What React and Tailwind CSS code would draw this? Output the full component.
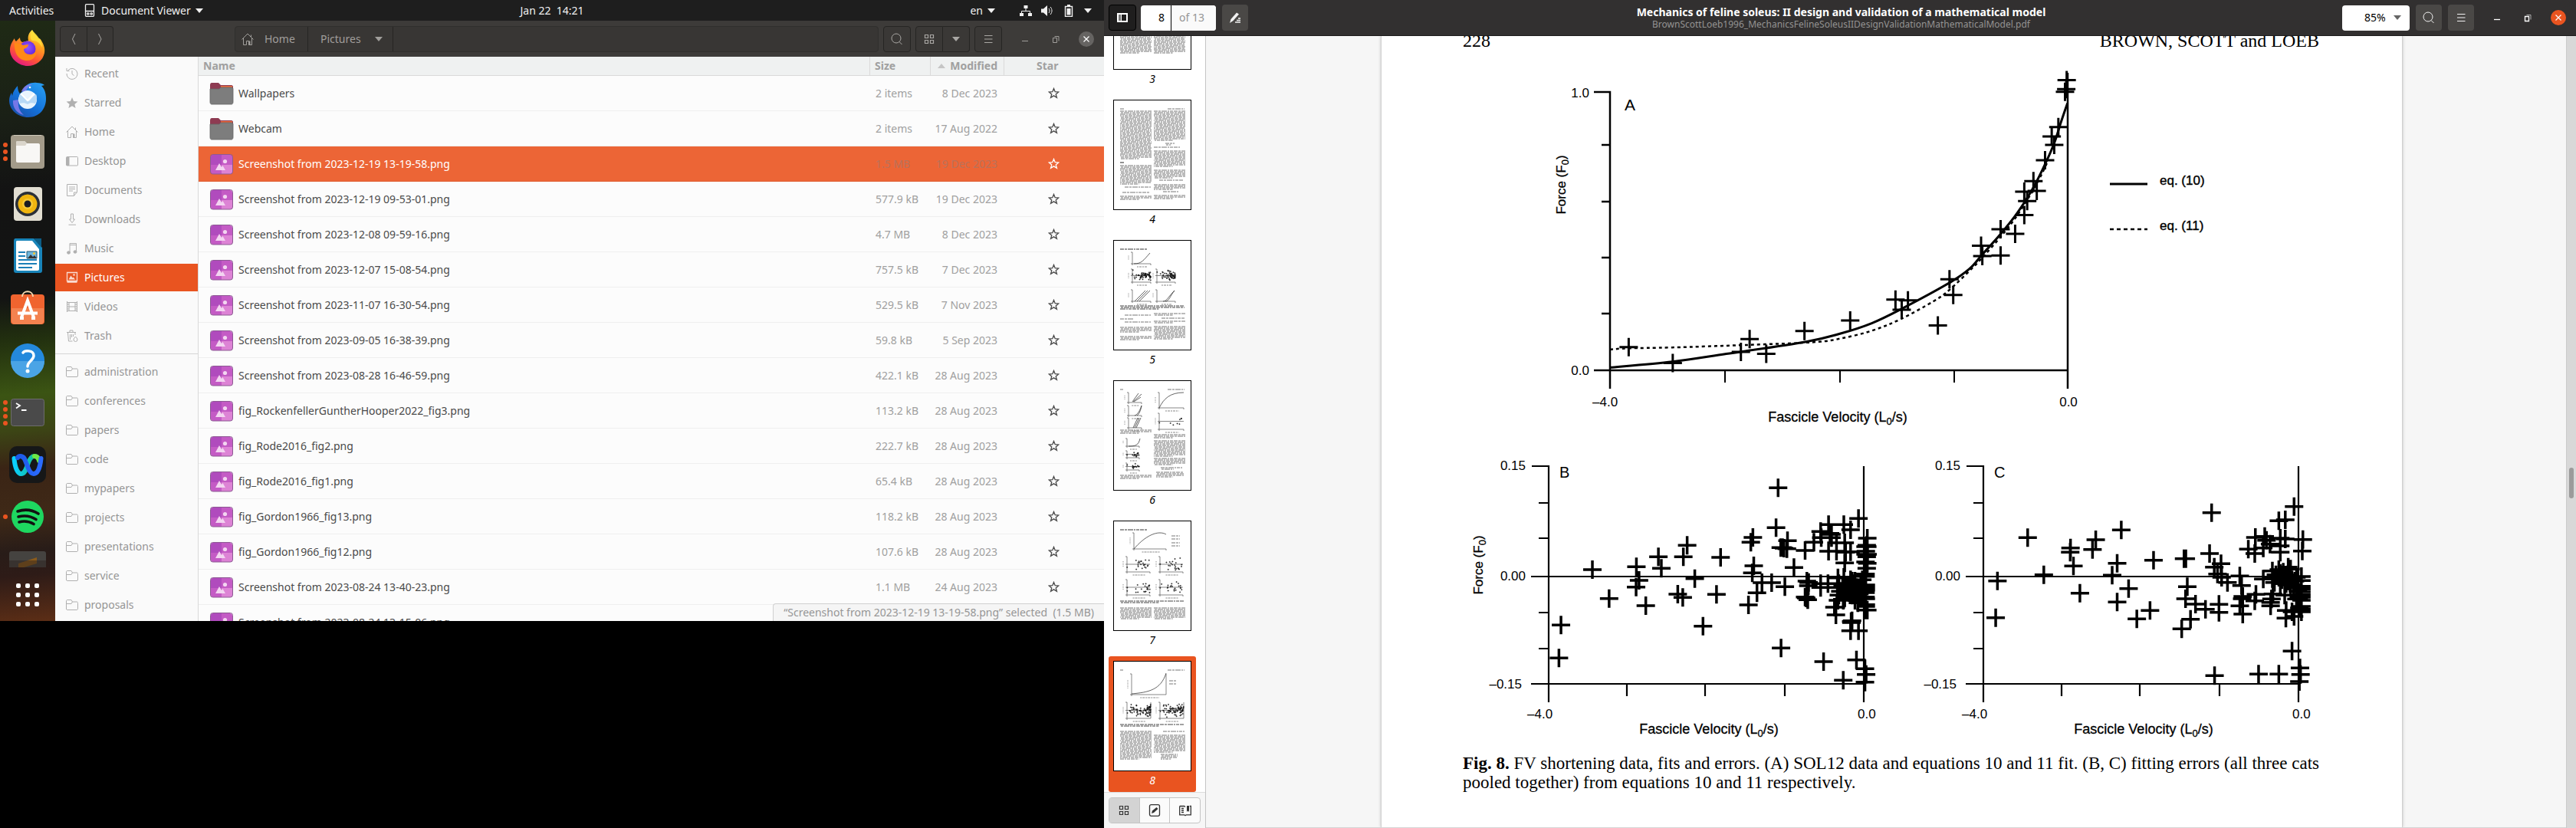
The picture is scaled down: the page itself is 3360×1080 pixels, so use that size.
import React from "react";

/* ---------- small shared icons ---------- */

function Caret({ className = "" }) {
  return (
    <svg viewBox="0 0 10 6" width="10" height="6" className={className} aria-hidden="true">
      <path d="M0 0h10L5 6z" fill="currentColor" />
    </svg>
  );
}

function Icon({ size = 16, className = "", children }) {
  return (
    <svg viewBox="0 0 16 16" width={size} height={size} fill="none" stroke="currentColor" strokeWidth="1" className={className} aria-hidden="true">
      {children}
    </svg>
  );
}

const HomeIcon = () => (
  <Icon>
    <path d="M.5 8.500 8 1l7.500 7.500M2.500 7v8.500h4v-5h3v5h4V7M12.500 5V2.500" />
    <path d="M9 10.500h2.500v5H9z" fill="currentColor" stroke="none" />
  </Icon>
);
const SearchIcon = () => (
  <Icon>
    <circle cx="7" cy="7" r="6" />
    <path d="m11 11.500 3.500 3.500" />
  </Icon>
);
const MenuIcon = () => (
  <Icon>
    <path d="M3 3.500h10.500M3 8h10.500M3 12.500h10.500" strokeWidth="1.200" />
  </Icon>
);
const GridIcon = () => (
  <Icon>
    <path d="M2.500 2.500h4v4h-4zM9.500 2.500h4v4h-4zM2.500 9.500h4v4h-4zM9.500 9.500h4v4h-4z" strokeWidth="1.200" />
  </Icon>
);

const placeIcons = {
  Recent: (
    <Icon>
      <path d="M3 3.500A7 7 0 1 1 1 8M1 1v3.500h3.500M8 4v4.500l2.500 2" />
    </Icon>
  ),
  Starred: (
    <Icon>
      <path d="m8 1 2.100 4.900 5.300.5-4 3.500 1.200 5.100L8 12.300 3.400 15l1.200-5.100-4-3.500 5.300-.5z" fill="currentColor" stroke="none" />
    </Icon>
  ),
  Home: <HomeIcon />,
  Desktop: (
    <Icon>
      <rect x=".5" y="2.500" width="15" height="11.500" rx="1" />
      <path d="M1 3h3v10.500H1z" fill="currentColor" />
    </Icon>
  ),
  Documents: (
    <Icon>
      <path d="M1.500.5h13v10l-4 5h-9zM14.500 11h-4v4M4 4h8M4 6.500h8M4 9h5" />
    </Icon>
  ),
  Downloads: (
    <Icon>
      <path d="M6.500 1h3v7h2L8 12.500 4.500 8h2zM3.500 15.200h9.500" />
    </Icon>
  ),
  Music: (
    <Icon>
      <path d="M5 13V1.500h8.500V12M5 3.500h8" />
      <ellipse cx="3.500" cy="13.500" rx="2" ry="1.700" fill="currentColor" />
      <ellipse cx="12" cy="12.500" rx="2" ry="1.700" fill="currentColor" />
    </Icon>
  ),
  Pictures: (
    <Icon>
      <path d="M1.500 1.500h13v11h-13zM1.500 14h13" strokeWidth="1.300" />
      <path d="m3.500 10.500 3-5 2 3 1-1 2.500 3z" fill="currentColor" stroke="none" />
      <circle cx="10.500" cy="4.500" r="1.200" fill="currentColor" stroke="none" />
    </Icon>
  ),
  Videos: (
    <Icon>
      <path d="M1.500 1v14M14.500 1v14M4 2.500h8v11H4zM4 8h8" />
      <path d="M2 2.500h2M2 5h2M2 8h2M2 11h2M2 13.500h2M12 2.500h2M12 5h2M12 8h2M12 11h2M12 13.500h2" />
    </Icon>
  ),
  Trash: (
    <Icon>
      <path d="M1 3.500h12M5 3V1h4v2M2.500 4l1 11h5M5.500 6v7M7.500 6v4M9.500 6v3M12 4v3" />
      <path d="M12.500 9c1 1.200 2.500 2.700 2.500 4a2.500 2.500 0 0 1-5 0c0-1.300 1.500-2.800 2.500-4z" />
    </Icon>
  ),
};
const FolderLineIcon = () => (
  <Icon>
    <path d="M.5 14V3c0-1 .5-1.500 1.500-1.500h5L8.500 4H14c1 0 1.500.5 1.500 1.500V13c0 1-.5 1.500-1.500 1.500H2c-1 0-1.500-.5-1.500-1.500zM1 6.500h6L8.500 4" />
  </Icon>
);

/* ---------- top bar ---------- */

function TopBar() {
  return (
    <div className="grid h-[27px] shrink-0 grid-cols-[1fr_auto_1fr] items-center bg-[#1e1e1e] text-[#f0f0f0]">
      <div className="flex items-center pl-3">
        <button className="w-[62px] text-left">Activities</button>
        <button className="ml-9 flex items-center">
          <svg viewBox="0 0 14 17" width="14" height="17" fill="none" stroke="currentColor" strokeWidth="1.300" aria-hidden="true">
            <path d="M2.500.7h9c.8 0 1 .5 1 1v13.600c0 .6-.3 1-1 1h-9c-.7 0-1-.4-1-1V1.700c0-.5.200-1 1-1zM1.500 9.500h11M3.500 13c0-1.500 2.500-1.500 2.500 0s-2.500 1.500-2.500 0zm4.500 0c0-1.500 2.500-1.500 2.500 0S8 14.500 8 13z" />
          </svg>
          <span className="ml-2">Document Viewer</span>
          <Caret className="ml-1.5" />
        </button>
      </div>
      <button className="whitespace-pre">Jan 22  14:21</button>
      <div className="flex items-center justify-end pr-4">
        <button className="flex items-center gap-1.5">
          en <Caret />
        </button>
        <button className="ml-8 flex items-center gap-3" aria-label="System menu">
          <Icon>
            <path d="M8 4v4M2.500 12V8.500h11V12" />
            <path d="M5.500 1h5v4h-5zM0 11h5v4H0zM11 11h5v4h-5z" fill="currentColor" stroke="none" />
          </Icon>
          <Icon>
            <path d="M0 5.500h3L8 1v14l-5-4.500H0z" fill="currentColor" stroke="none" />
            <path d="M10 5c1.300 1.500 1.300 4.500 0 6M12 3c2.700 3 2.700 7 0 10" />
          </Icon>
          <Icon>
            <path d="M3.500 2.500h9v13h-9z" strokeWidth="1.400" />
            <path d="M6 0h4v2H6zM5.500 5h5v8.500h-5z" fill="currentColor" stroke="none" />
          </Icon>
          <Caret />
        </button>
      </div>
    </div>
  );
}

/* ---------- dock ---------- */

const Firefox = () => (
  <svg viewBox="0 0 48 48" width="48" height="48" aria-hidden="true">
    <defs>
      <linearGradient id="ffBody" x1=".8" y1="0" x2=".3" y2="1">
        <stop offset="0" stopColor="#fff44f" />
        <stop offset=".35" stopColor="#ffa21f" />
        <stop offset=".7" stopColor="#ff5634" />
        <stop offset="1" stopColor="#e31587" />
      </linearGradient>
      <radialGradient id="ffGlobe" cx=".5" cy=".4">
        <stop offset="0" stopColor="#9059ff" />
        <stop offset="1" stopColor="#6a2be0" />
      </radialGradient>
    </defs>
    <path d="M30 1c2 5 6 7 8 11 2 0 3 1 4 3 3 5 5 10 4 16-2 10-11 17-22 17S1 39 1 27c0-6 3-11 6-15 0 2 1 3 2 4l5-5c0 3 1 5 3 6l8-2c-1-5 0-10 5-14z" fill="url(#ffBody)" />
    <circle cx="24" cy="26" r="10.500" fill="url(#ffGlobe)" />
    <path d="M7 18c5 0 8 1 11 3l7-1c0 3-3 5-6 6 0 4 3 7 8 7 4 0 7-2 8-6 2 8-4 14-12 14-10 0-17-9-16-23z" fill="#ff8a16" />
    <path d="M30 1c3 5 13 11 13 23-3-6-7-9-12-9-3 0-5-4-1-14z" fill="#ffe23a" opacity=".8" />
  </svg>
);
const Thunderbird = () => (
  <svg viewBox="0 0 48 48" width="48" height="48" aria-hidden="true">
    <defs>
      <linearGradient id="tbBody" x1="1" y1="0" x2=".2" y2="1">
        <stop offset="0" stopColor="#2aa3f5" />
        <stop offset=".6" stopColor="#1370d8" />
        <stop offset="1" stopColor="#1b4fa8" />
      </linearGradient>
    </defs>
    <path d="M18 12C20 4 29 1 36 2c4 0 8 1 10 3l-4 1c4 4 6 9 6 17 0 13-9 24-23 24S0 37 0 25c0-3 1-7 3-10l1 4C5 13 8 9 11 6c0 4 1 8 3 10z" fill="url(#tbBody)" />
    <path d="M16 13c3-7 8-9 14-9-6 3-7 6-9 11zM5 25c-1 9 5 17 14 19-6-5-8-12-7-20z" fill="#8d7df0" opacity=".8" />
    <circle cx="24" cy="24" r="12" fill="#e9f4fd" />
    <path d="M14 17c5 1 7 8 10 9s6-7 11-9c2 3 1 9-1 12-5-1-6-1-10 1-4-2-6-2-10-1-1-4-2-8 0-12z" fill="#b7d8f5" />
    <path d="m15 16 9 9 9-9" fill="none" stroke="#fff" strokeWidth="2" />
    <circle cx="27" cy="8" r="1.300" fill="#fff" />
  </svg>
);
const Files = () => (
  <svg viewBox="0 0 48 48" width="48" height="48" aria-hidden="true">
    <rect x="2" y="2" width="44" height="44" rx="4" fill="#a39b8a" />
    <path d="M6 2.500h36" stroke="#cfc9bb" />
    <path d="M9 12c0-1.500 1-2 2-2h9l3 3h15c1.500 0 2 1 2 2v21c0 1.500-1 2-2 2H11c-1.500 0-2-1-2-2z" fill="#f8f7f5" />
    <path d="M9 12c0-1.500 1-2 2-2h9l3 3-2 3H9z" fill="#dad5cb" />
  </svg>
);
const Rhythmbox = () => (
  <svg viewBox="0 0 48 48" width="48" height="48" aria-hidden="true">
    <rect x="6" y="2" width="37" height="44" rx="4" fill="#e2ded2" />
    <circle cx="24" cy="24" r="16" fill="#2b3038" />
    <circle cx="24" cy="24" r="12.500" fill="#f0b50f" />
    <circle cx="24" cy="24" r="7" fill="#f6c935" />
    <circle cx="24" cy="24" r="4.500" fill="#1a1c22" />
  </svg>
);
const Writer = () => (
  <svg viewBox="0 0 48 48" width="48" height="48" aria-hidden="true">
    <path d="M8 1h24l11 12v30c0 2-1 3-3 3H9c-2 0-3-1-3-3V4c0-2 1-3 2-3z" fill="#1884b9" />
    <path d="M32 1h10v12z" fill="#0c5d86" />
    <path d="M10 4h20l9 11v26c0 1-1 2-2 2H11c-1 0-2-1-2-2V5z" fill="#fff" />
    <path d="M12 19h9M12 24h9M12 29h24M12 34h24M12 39h18" stroke="#1b7fb8" strokeWidth="2" />
    <path d="M23 18h13v9H23z" fill="#6fb7de" stroke="#1c5875" />
    <path d="m24 27 4-5 3 3 2-2 3 4z" fill="#333" />
    <circle cx="32.500" cy="20.500" r="1.500" fill="#f8c72c" />
  </svg>
);
const Software = () => (
  <svg viewBox="0 0 48 48" width="48" height="48" aria-hidden="true">
    <rect x="2" y="6" width="44" height="39" rx="4" fill="#f0642f" />
    <path d="M3 24h42v17c0 2-2 4-4 4H7c-2 0-4-2-4-4z" fill="#f4824f" />
    <path d="M17 9c0-9 14-9 14 0" fill="none" stroke="#f5d9b0" strokeWidth="1.800" />
    <path d="m16 36 8-22 8 22M11 30.500h26M14 37h5M29 37h5" fill="none" stroke="#fff" strokeWidth="4" />
  </svg>
);
const Help = () => (
  <svg viewBox="0 0 48 48" width="48" height="48" aria-hidden="true">
    <circle cx="24" cy="24" r="22" fill="#2489dc" />
    <path d="M2 25a22 22 0 0 0 44 0z" fill="#4aa4e6" />
    <path d="M18 14c2-3 14-4 14 4 0 6-8 7-8 14" fill="none" stroke="#fff" strokeWidth="3.500" strokeLinecap="round" />
    <circle cx="24" cy="38" r="2.500" fill="#fff" />
  </svg>
);
const Terminal = () => (
  <svg viewBox="0 0 48 48" width="48" height="48" aria-hidden="true">
    <rect x="2.500" y="6.500" width="43" height="35" rx="3" fill="#4a4a4a" stroke="#6d6d6d" />
    <path d="m9 12 5 3-5 3.500M16 21h6.500" fill="none" stroke="#fff" strokeWidth="1.800" />
  </svg>
);
const Webex = () => (
  <svg viewBox="0 0 48 48" width="48" height="48" aria-hidden="true">
    <defs>
      <linearGradient id="wxA">
        <stop offset="0" stopColor="#0ad0ff" />
        <stop offset="1" stopColor="#17b978" />
      </linearGradient>
      <linearGradient id="wxB">
        <stop offset="0" stopColor="#1c58e8" />
        <stop offset="1" stopColor="#2b6bff" />
      </linearGradient>
    </defs>
    <rect width="48" height="48" rx="10" fill="#161718" />
    <path d="M6.500 16c1 13 5 20 9 20s6-4 8.500-12 5-11 9-11c3 0 5 2 6.500 5" fill="none" stroke="url(#wxA)" strokeWidth="6" strokeLinecap="round" />
    <path d="M33 13c3 0 5 2 6 6" fill="none" stroke="#6ee845" strokeWidth="6" strokeLinecap="round" />
    <path d="M11 15c2-3 8-3 10 4l4 10c2 5 4 7 7 7 4 0 8-5 9.500-20" fill="none" stroke="url(#wxB)" strokeWidth="6" strokeLinecap="round" />
  </svg>
);
const Spotify = () => (
  <svg viewBox="0 0 48 48" width="48" height="48" aria-hidden="true">
    <circle cx="24" cy="24" r="21" fill="#1ed760" />
    <path d="M11 17c9-3 19-2 27 3M12 24c8-2 16-1 23 3.500M13 31c7-2 13-1 19 2.500" fill="none" stroke="#111" strokeWidth="3.600" strokeLinecap="round" />
  </svg>
);

const dockApps = [
  ["Firefox", Firefox, 0],
  ["Thunderbird Mail", Thunderbird, 0],
  ["Files", Files, 3],
  ["Rhythmbox", Rhythmbox, 0],
  ["LibreOffice Writer", Writer, 0],
  ["Ubuntu Software", Software, 0],
  ["Help", Help, 0],
  ["Terminal", Terminal, 4],
  ["Webex", Webex, 0],
  ["Spotify", Spotify, 1],
];

function Dock() {
  return (
    <nav
      aria-label="Dock"
      className="flex w-[72px] shrink-0 flex-col bg-[linear-gradient(175deg,#1f2a15_0%,#1a2016_16%,#131313_28%,#131413_46%,#22300f_53%,#3b5413_62%,#3c4515_68%,#3a2415_74%,#3f2917_82%,#281c18_88%,#2e1b17_92%,#5c2e16_100%)] pt-px"
    >
      {dockApps.map(([name, Glyph, windows]) => (
        <button key={name} aria-label={name} className="relative flex h-[68px] shrink-0 items-center justify-center">
          <span className="absolute left-1 flex flex-col gap-[3px]">
            {Array.from({ length: windows }, (_, i) => (
              <i key={i} className="size-1.5 rounded-full bg-[#e95420]" />
            ))}
          </span>
          <Glyph />
        </button>
      ))}
      <button aria-label="Sublime Text" className="flex h-[34px] shrink-0 justify-center pt-[11px]">
        <svg viewBox="0 0 48 21" width="48" height="21" aria-hidden="true">
          <rect width="48" height="30" rx="3" fill="#454340" />
          <path d="M12 16 36 8v8l-20 6-4-1z" fill="#8a5a1c" />
          <path d="M0 12h48v9H0z" fill="#28201b" opacity=".45" />
        </svg>
      </button>
      <button aria-label="Show Applications" className="flex flex-1 items-center justify-center">
        <span className="grid grid-cols-3 gap-1.5">
          {Array.from({ length: 9 }, (_, i) => (
            <i key={i} className="size-1.5 rounded-[2px] bg-white" />
          ))}
        </span>
      </button>
    </nav>
  );
}

/* ---------- files window ---------- */

const places = ["Recent", "Starred", "Home", "Desktop", "Documents", "Downloads", "Music", "Pictures", "Videos", "Trash"];
const bookmarks = ["administration", "conferences", "papers", "code", "mypapers", "projects", "presentations", "service", "proposals"];
const files = [
  ["Wallpapers", "2 items", "8 Dec 2023", "dir"],
  ["Webcam", "2 items", "17 Aug 2022", "dir"],
  ["Screenshot from 2023-12-19 13-19-58.png", "1.5 MB", "19 Dec 2023", "sel"],
  ["Screenshot from 2023-12-19 09-53-01.png", "577.9 kB", "19 Dec 2023"],
  ["Screenshot from 2023-12-08 09-59-16.png", "4.7 MB", "8 Dec 2023"],
  ["Screenshot from 2023-12-07 15-08-54.png", "757.5 kB", "7 Dec 2023"],
  ["Screenshot from 2023-11-07 16-30-54.png", "529.5 kB", "7 Nov 2023"],
  ["Screenshot from 2023-09-05 16-38-39.png", "59.8 kB", "5 Sep 2023"],
  ["Screenshot from 2023-08-28 16-46-59.png", "422.1 kB", "28 Aug 2023"],
  ["fig_RockenfellerGuntherHooper2022_fig3.png", "113.2 kB", "28 Aug 2023"],
  ["fig_Rode2016_fig2.png", "222.7 kB", "28 Aug 2023"],
  ["fig_Rode2016_fig1.png", "65.4 kB", "28 Aug 2023"],
  ["fig_Gordon1966_fig13.png", "118.2 kB", "28 Aug 2023"],
  ["fig_Gordon1966_fig12.png", "107.6 kB", "28 Aug 2023"],
  ["Screenshot from 2023-08-24 13-40-23.png", "1.1 MB", "24 Aug 2023"],
  ["Screenshot from 2023-08-24 13-15-06.png", "", ""],
];

const FolderIcon = () => (
  <svg viewBox="0 0 32 30" width="32" height="30" aria-hidden="true">
    <path d="M1 4c0-2 1-3 2-3h9l3 3h14c1 0 2 1 2 2v8H1z" fill="#8e3b52" />
    <path d="M15 5h15v2H15z" fill="#e9683c" />
    <path d="M1 9h12l2-2h14c1 0 2 1 2 2v17c0 2-1 3-2 3H3c-1 0-2-1-2-3z" fill="#7d7d7d" stroke="#666" strokeWidth=".8" />
  </svg>
);
const ImageIcon = () => (
  <svg viewBox="0 0 32 28" width="32" height="28" aria-hidden="true">
    <rect x="2" y="2" width="28" height="25" rx="3" fill="#c45bc5" />
    <path d="M2 5c0-2 1-3 3-3h11v13H2z" fill="#b04bbd" />
    <path d="M16 15h14v9c0 2-1 3-3 3H16z" fill="#dd83d5" />
    <rect x="1.500" y="1.500" width="29" height="25.500" rx="3" fill="none" stroke="#8d5a93" />
    <path d="m8 22 5-9 3 5 1.500-2 3.500 6z" fill="#f3d5f1" />
    <circle cx="20.500" cy="10.500" r="2.600" fill="#f3d5f1" />
  </svg>
);
const StarIcon = () => (
  <svg viewBox="0 0 16 16" width="15" height="15" aria-hidden="true">
    <path d="m8 1.600 1.800 4.500 4.900.3-3.800 3.100 1.300 4.700L8 11.600l-4.200 2.600 1.300-4.700L1.300 6.400l4.900-.3z" fill="none" stroke="currentColor" strokeWidth="1.400" />
  </svg>
);

const fileButton = "flex h-[34px] items-center justify-center border border-[#262523] bg-[#3a3836] text-[#a9a7a4]";

function FilesHeader() {
  return (
    <header className="flex h-[47px] shrink-0 items-center bg-[#3d3b39] pl-1.5 pr-[3px] text-[#a09e9b]">
      <div className="flex w-[70px]">
        <button aria-label="Back" className={fileButton + " flex-1 rounded-l"}>
          <Icon><path d="M10 1 6.500 8l3.500 7" /></Icon>
        </button>
        <button aria-label="Forward" className={fileButton + " flex-1 rounded-r border-l-0 text-[#6b6967]"}>
          <Icon><path d="m6.500 1 3.500 7-3.500 7" /></Icon>
        </button>
      </div>
      <div className="ml-[158px] flex h-[34px] min-w-0 flex-1 rounded border border-[#302f2d] bg-[#383634]">
        <button className="flex w-[95px] items-center gap-[14px] border-r border-[#262523] pl-2">
          <HomeIcon /> Home
        </button>
        <button className="flex w-[111px] items-center gap-[18px] border-r border-[#262523] pl-4">
          Pictures <Caret />
        </button>
      </div>
      <button aria-label="Search" className={fileButton + " ml-1.5 w-9 rounded"}><SearchIcon /></button>
      <div className="ml-1.5 flex w-[71px]">
        <button aria-label="Grid view" className={fileButton + " flex-1 rounded-l"}><GridIcon /></button>
        <button aria-label="View options" className={fileButton + " flex-1 rounded-r border-l-0"}><Caret /></button>
      </div>
      <button aria-label="Menu" className={fileButton + " ml-1.5 w-9 rounded"}><MenuIcon /></button>
      <div className="ml-2.5 flex">
        <button aria-label="Minimise" className="flex size-10 items-center justify-center"><Icon><path d="M4 10.500h8" /></Icon></button>
        <button aria-label="Restore" className="flex size-10 items-center justify-center"><Icon><path d="M4.500 6.500h5v6h-5zM6.500 4.500h5.500v6" /></Icon></button>
        <button aria-label="Close" className="flex size-10 items-center justify-center">
          <span className="flex size-5 items-center justify-center rounded-full bg-[#666462] text-white"><Icon size={14}><path d="m4 4 8 8M12 4l-8 8" strokeWidth="1.400" /></Icon></span>
        </button>
      </div>
    </header>
  );
}

function Place({ name, icon }) {
  const on = name === "Pictures";
  return (
    <a
      href={"#" + name}
      aria-current={on ? "page" : undefined}
      className={"mb-0.5 flex h-9 shrink-0 items-center gap-2 pl-[14px] " + (on ? "bg-[#e95420] text-white" : "text-[#959595]")}
    >
      <span className={on ? "opacity-80" : "text-[#b0b0b0]"}>{icon}</span>
      {name}
    </a>
  );
}

function FilesWindow() {
  return (
    <section className="flex min-w-0 flex-1 flex-col">
      <FilesHeader />
      <div className="flex min-h-0 flex-1">
        <aside className="flex w-[187px] shrink-0 flex-col overflow-hidden border-r border-[#d9d9d9] bg-[#fafafa] pt-1">
          {places.map((p) => <Place key={p} name={p} icon={placeIcons[p]} />)}
          <div className="mt-[3px] mb-[5px] shrink-0 border-t border-[#d5d5d5]" />
          {bookmarks.map((b) => <Place key={b} name={b} icon={<FolderLineIcon />} />)}
        </aside>
        <div className="relative min-w-0 flex-1 overflow-hidden bg-[#fcfcfc]">
          <table className="w-full table-fixed border-separate border-spacing-0 text-left text-[#a0a0a0]">
            <colgroup>
              <col />
              <col className="w-[79px]" />
              <col className="w-[96px]" />
              <col className="w-[131px]" />
            </colgroup>
            <thead>
              <tr className="h-[25px] bg-[#eff1f1] leading-6 font-bold">
                <th className="border-b border-[#dadada] p-0 pl-1.5">Name</th>
                <th className="border-b border-l border-[#dadada] p-0 pl-1.5">Size</th>
                <th className="border-b border-l border-[#dadada] p-0 pr-2">
                  <span className="flex items-center justify-end gap-1.5">
                    <Caret className="rotate-180 text-[#c5c5c5]" />Modified
                  </span>
                </th>
                <th className="border-b border-l border-[#dadada] p-0 pl-[42px]">Star</th>
              </tr>
            </thead>
            <tbody>
              {files.map(([name, size, date, kind]) => {
                const sel = kind === "sel";
                return (
                  <tr key={name} className={"h-[46px] " + (sel ? "bg-[#ec6536] text-[#b9725a]" : "")}>
                    <td className="border-b border-black/5 p-0">
                      <span className={"flex items-center gap-1.5 pl-[14px] " + (sel ? "text-white" : "text-[#4a4a4a]")}>
                        {kind === "dir" ? <FolderIcon /> : <ImageIcon />}
                        {name}
                      </span>
                    </td>
                    <td className="border-b border-black/5 p-0 pl-2">{size}</td>
                    <td className="border-b border-black/5 p-0 pr-2 text-right">{date}</td>
                    <td className="border-b border-black/5 p-0 pl-[58px]">
                      <button aria-label={"Star " + name} className={"block " + (sel ? "text-white" : "text-[#4a4a4a]")}><StarIcon /></button>
                    </td>
                  </tr>
                );
              })}
            </tbody>
          </table>
          <div className="absolute right-0 bottom-0 rounded-tl border-t border-l border-[#d0d0d0] bg-[#f5f5f5] px-[13px] leading-[22px] whitespace-pre text-[#959595]">
            “Screenshot from 2023-12-19 13-19-58.png” selected  (1.5 MB)
          </div>
        </div>
      </div>
    </section>
  );
}

/* ---------- thumbnails ---------- */

function Lines({ x, y, w = 41, n, tone = "#777" }) {
  return Array.from({ length: n }, (_, i) => (
    <path key={i} d={`M${x} ${y + i * 2}h${n > 1 && i === n - 1 ? w * 0.6 : w}`} stroke={tone} strokeWidth="1" strokeDasharray="5 1 3 1 7 1 2 1 4 1" strokeDashoffset={i * 5} />
  ));
}

function noise(seed) {
  let s = seed;
  return () => (s = (s * 16807) % 2147483647) / 2147483647;
}

function MiniPlot({ x, y, w, h, d, dots = 0, seed = 7, right }) {
  const r = noise(seed);
  return (
    <g stroke="#555" fill="none" strokeWidth=".7">
      <path d={`M${x - 2} ${y}h2v${h}h${w}M${x - 2} ${y + h}h2v2M${x + w} ${y + h}${right ? `v-${h}` : "v2"}`} />
      {d && <path d={d} stroke="#222" />}
      {dots > 0 && <path d={`M${x - 2} ${y + h / 2}h${w + 2}`} />}
      {Array.from({ length: dots }, (_, i) => {
        const px = x + w * Math.sqrt(r());
        const py = y + h * (0.5 + (r() + r() - 1) * 0.45);
        return <path key={i} d={`M${px - 1} ${py}h2M${px} ${py - 1}v2`} stroke="#111" />;
      })}
      <path d={`M${x + w * 0.25} ${y + h + 4}h${w * 0.55}`} strokeDasharray="2 1 3 1" />
      <path d={`M${x - 5} ${y + h * 0.3}v${h * 0.4}`} strokeDasharray="1 1" />
    </g>
  );
}

const pageArt = {
  3: (
    <>
      <Lines x={9} y={14} n={55} />
      <Lines x={53} y={14} n={55} />
    </>
  ),
  4: (
    <>
      <Lines x={9} y={12} w={5} n={1} /><Lines x={71} y={12} w={22} n={1} />
      <Lines x={9} y={15} n={32} /><Lines x={9} y={82} w={6} n={1} tone="#222" /><Lines x={9} y={86} n={13} />
      <Lines x={15} y={114} w={34} n={1} /><Lines x={12} y={121} w={36} n={1} /><Lines x={9} y={126} n={3} />
      <Lines x={53} y={15} n={20} /><Lines x={68} y={57} w={12} n={2} /><Lines x={53} y={62} w={34} n={1} />
      <Lines x={53} y={67} n={11} /><Lines x={53} y={92} n={6} /><Lines x={60} y={105} w={32} n={1} />
      <Lines x={53} y={111} n={4} /><Lines x={65} y={120} w={20} n={1} /><Lines x={53} y={125} n={3} />
    </>
  ),
  5: (
    <>
      <Lines x={9} y={12} w={35} n={1} tone="#333" />
      <MiniPlot x={25} y={16} w={24} h={15} d="M27 31c10 0 12-4 21-14" />
      <MiniPlot x={25} y={38} w={24} h={17} dots={60} seed={11} /><MiniPlot x={57} y={38} w={24} h={17} dots={60} seed={23} />
      <MiniPlot x={25} y={65} w={24} h={15} d="M28 80 42 66M31 80 45 66M34 80 48 66" /><MiniPlot x={57} y={65} w={24} h={15} d="M65 80c5 0 6-5 15-14M68 80c5 0 6-7 12-14" />
      <Lines x={9} y={86} w={84} n={3} tone="#444" />
      <Lines x={15} y={98} w={34} n={1} /><Lines x={9} y={103} w={17} n={1} /><Lines x={15} y={107} w={34} n={1} /><Lines x={9} y={114} n={4} /><Lines x={9} y={126} n={3} />
      <Lines x={53} y={96} n={2} /><Lines x={63} y={102} w={30} n={1} /><Lines x={53} y={106} n={2} /><Lines x={53} y={113} n={9} />
    </>
  ),
  6: (
    <>
      <Lines x={9} y={12} w={4} n={1} /><Lines x={71} y={12} w={22} n={1} />
      <MiniPlot x={20} y={16} w={17} h={13} d="M26 28 37 18M25 28 33 17M27 28 36 22" /><MiniPlot x={20} y={33} w={17} h={13} d="M28 46c4-1 7-7 9-13M31 46c3-2 5-7 6-13" /><MiniPlot x={20} y={49} w={17} h={13} d="m26 62 6-13M28 62l6-13M30 62l6-13" />
      <Lines x={9} y={65} n={3} />
      <MiniPlot x={18} y={76} w={16} h={10} d="M20 86c9 0 13-1 15-10" /><MiniPlot x={18} y={92} w={16} h={9} dots={14} /><MiniPlot x={18} y={108} w={16} h={9} dots={14} seed={31} />
      <Lines x={9} y={124} n={3} />
      <MiniPlot x={60} y={16} w={32} h={20} d="M60 36C66 24 74 16 92 16" /><MiniPlot x={60} y={43} w={32} h={21} dots={8} />
      <Lines x={53} y={71} n={3} /><Lines x={53} y={79} n={11} /><Lines x={53} y={102} n={5} /><Lines x={62} y={114} w={28} n={2} /><Lines x={56} y={120} w={36} n={4} />
    </>
  ),
  7: (
    <>
      <Lines x={9} y={12} w={35} n={1} tone="#333" />
      <MiniPlot x={27} y={16} w={42} h={21} d="M27 37C40 22 52 16 61 16c4 0 6 1 8 2" />
      <Lines x={76} y={20} w={11} n={1} /><Lines x={76} y={24} w={11} n={1} /><Lines x={76} y={29} w={11} n={1} /><Lines x={76} y={33} w={11} n={1} />
      <MiniPlot x={18} y={47} w={30} h={20} dots={22} seed={5} /><MiniPlot x={61} y={47} w={30} h={20} dots={22} seed={9} />
      <MiniPlot x={18} y={77} w={30} h={20} dots={22} seed={13} /><MiniPlot x={61} y={77} w={30} h={20} dots={22} seed={17} />
      <Lines x={9} y={105} w={84} n={2} tone="#444" /><Lines x={9} y={114} n={8} /><Lines x={53} y={114} n={8} />
    </>
  ),
  8: (
    <>
      <Lines x={9} y={12} w={4} n={1} /><Lines x={71} y={12} w={22} n={1} />
      <MiniPlot x={24} y={17} w={45} h={27} right d="M24 43C46 41 62 38 69 16" />
      <Lines x={73} y={26} w={10} n={1} /><Lines x={73} y={30} w={10} n={1} />
      <MiniPlot x={18} y={54} w={31} h={21} dots={80} seed={41} right /><MiniPlot x={61} y={54} w={31} h={21} dots={80} seed={43} right />
      <Lines x={9} y={83} w={84} n={2} tone="#444" /><Lines x={9} y={92} n={19} />
      <Lines x={65} y={92} w={28} n={1} /><Lines x={53} y={97} n={12} /><Lines x={62} y={122} w={22} n={4} />
    </>
  ),
};

function Thumbnails() {
  return (
    <aside className="flex w-[133px] shrink-0 flex-col border-r border-[#c4c4c4] bg-white">
      <div className="flex min-h-0 flex-1 flex-col justify-end gap-1.5 overflow-hidden pl-1.5">
        {Object.entries(pageArt).map(([num, art]) => {
          const on = num === "8";
          return (
            <a
              key={num}
              href={"#page-" + num}
              className={"flex h-[177px] w-[114px] shrink-0 flex-col items-center rounded-[3px] pt-1.5 italic " + (on ? "bg-[#e95420] text-white" : "text-black")}
            >
              <svg viewBox="0 0 102 144" width="102" height="144" className="bg-white" aria-hidden="true">
                {art}
                <rect x=".5" y=".5" width="101" height="143" fill="none" stroke="#000" />
              </svg>
              <span className="leading-6">{num}</span>
            </a>
          );
        })}
      </div>
      <div className="flex h-[47px] shrink-0 items-center border-t border-[#dcdcdc] bg-[#f6f6f6] px-1.5 text-[#333]">
        <div className="flex h-[34px] w-[120px] rounded border border-[#c4c4c4] bg-[#fbfbfb]">
          <button aria-label="Thumbnails" className="flex flex-1 items-center justify-center bg-[#d3d3d3]"><GridIcon /></button>
          <button aria-label="Annotations" className="flex flex-1 items-center justify-center border-x border-[#c4c4c4]">
            <Icon><rect x="1.500" y=".7" width="13" height="14.600" rx="2" strokeWidth="1.300" /><path d="m4 12 1-3.500 5.500-4.500 2 2-5.500 5z" fill="currentColor" stroke="none" /></Icon>
          </button>
          <button aria-label="Bookmarks" className="flex flex-1 items-center justify-center">
            <Icon><path d="M.7 2.500h6L8 3.500M.7 2.500v11.300h6l1.300 1 1.300-1h6V2.500h-1.500M3 5.500h3M3 8h3M3 10.500h3" strokeWidth="1.300" /><path d="M10 2h3v8l-1.500-1.500L10 10z" fill="currentColor" stroke="none" /></Icon>
          </button>
        </div>
      </div>
    </aside>
  );
}

/* ---------- figure ---------- */

/* Samples are kept in digitiser counts; each scale maps them to chart pixels. */
const scaleA = ([x, y]) => [100 + (x - 370) / 1.845, 393 + (y - 1329) / 2.751];
const scaleBC = (axis) => ([x, y]) => [112 + (x - axis) / 2.613, 160 + (y - 517) / 3];

function Crosses({ points, scale, r = 12, width = 3.5 }) {
  const d = points
    .map((p) => {
      const [x, y] = scale(p);
      return `M${x - r} ${y}h${2 * r}M${x} ${y - r}v${2 * r}`;
    })
    .join("");
  return <path d={d} stroke="#000" strokeWidth={width} fill="none" />;
}

function smooth(points) {
  let d = `M${points[0][0]} ${points[0][1]}`;
  for (let i = 0; i < points.length - 1; i++) {
    const a = points[i - 1] || points[i];
    const b = points[i];
    const c = points[i + 1];
    const e = points[i + 2] || c;
    d += `C${b[0] + (c[0] - a[0]) / 6} ${b[1] + (c[1] - a[1]) / 6} ${c[0] - (e[0] - b[0]) / 6} ${c[1] - (e[1] - b[1]) / 6} ${c[0]} ${c[1]}`;
  }
  return d;
}

const forceSamples = [
  [415, 1246], [521, 1303], [685, 1263], [706, 1217], [746, 1270], [838, 1188], [948, 1150], [1057, 1075], [1072, 1112],
  [1087, 1078], [1159, 1168], [1187, 1002], [1196, 1059], [1263, 882], [1266, 919], [1310, 823], [1310, 917], [1345, 839],
  [1367, 772], [1374, 722], [1367, 688], [1397, 685], [1389, 650], [1417, 575], [1439, 520], [1433, 490], [1449, 456],
  [1469, 288], [1468, 320], [1465, 330],
];
const eq10 = [
  [370, 1319], [520, 1298], [650, 1270], [840, 1227], [925, 1197], [1000, 1160], [1070, 1110], [1187, 1015], [1235, 965],
  [1265, 915], [1310, 840], [1350, 765], [1390, 670], [1420, 580], [1440, 510], [1455, 440], [1471, 370],
];
const eq11 = [
  [370, 1254], [415, 1250], [520, 1247], [700, 1238], [860, 1228], [925, 1215], [1000, 1187], [1070, 1145], [1150, 1080],
  [1187, 1040], [1240, 965], [1270, 918], [1310, 850], [1350, 773], [1395, 665], [1425, 575],
];

const residualsB = [
  [1148, 170], [1141, 326], [515, 490], [572, 603], [665, 479], [674, 532], [664, 558], [740, 440], [750, 485], [697, 631],
  [408, 707], [401, 836], [838, 395], [825, 440], [864, 525], [806, 586], [823, 599], [892, 711], [952, 442], [938, 587],
  [1062, 364], [1055, 383], [1065, 475], [1060, 503], [1093, 541], [1076, 581], [1126, 541], [1047, 628], [1180, 377],
  [1157, 404], [1163, 404], [1168, 406], [1178, 408], [1202, 482], [1171, 557], [1240, 415], [1270, 383], [1293, 341],
  [1320, 314], [1372, 314], [1325, 348], [1330, 352], [1295, 365], [1330, 365], [1395, 334], [1422, 290], [1320, 418], [1347, 418],
  [1347, 385], [1375, 385], [1378, 422], [1395, 420], [1375, 464], [1452, 367], [1447, 418], [1246, 535], [1251, 553],
  [1240, 597], [1249, 608], [1244, 601], [1293, 545], [1293, 560], [1318, 545], [1252, 540], [1352, 522], [1345, 637], [1345, 667],
  [1352, 610], [1400, 690], [1395, 729], [1422, 729], [1398, 697], [1397, 693], [1415, 843], [1444, 878], [1444, 930], [1448, 900],
  [1370, 923], [1303, 850], [1158, 797], [1372, 520], [1355, 545], [1340, 637], [1368, 555], [1360, 575], [1375, 600],
  [1385, 570], [1395, 530], [1405, 545], [1400, 590], [1410, 610], [1420, 575], [1420, 620], [1430, 550], [1430, 600],
  [1435, 530], [1415, 560], [1370, 610], [1446, 507], [1446, 516], [1447, 550], [1447, 560], [1447, 570], [1446, 580],
  [1446, 597], [1447, 604], [1447, 627], [1447, 634], [1446, 648], [1452, 648], [1450, 395], [1450, 440], [1452, 465], [1450, 485],
  [1400, 535], [1410, 535], [1410, 555], [1420, 565], [1410, 580], [1420, 590], [1420, 605], [1425, 585], [1390, 580], [1350, 560],
  [1355, 590], [1452, 400], [1453, 430], [1446, 400], [1446, 430], [1446, 460],
];
const residualsC = [
  [1111, 267], [1392, 243], [1340, 299], [1362, 295], [484, 365], [803, 335], [716, 373], [705, 411], [630, 405], [629, 422],
  [640, 476], [539, 510], [381, 534], [375, 678], [662, 582], [789, 465], [772, 512], [828, 564], [789, 617], [856, 683],
  [901, 650], [913, 453], [1017, 447], [1023, 447], [1028, 557], [1022, 604], [1056, 625], [1090, 645], [1039, 684],
  [1009, 722], [1104, 427], [1120, 480], [1143, 467], [1131, 507], [1145, 520], [1165, 540], [1207, 515], [1213, 552],
  [1136, 626], [1136, 657], [1217, 595], [1207, 632], [1217, 664], [1215, 604], [1236, 410], [1260, 364], [1258, 427],
  [1292, 360], [1298, 375], [1287, 405], [1310, 390], [1345, 367], [1362, 370], [1345, 397], [1345, 422], [1422, 372],
  [1420, 417], [1262, 587], [1258, 612], [1315, 605], [1312, 618], [1312, 632], [1364, 680], [1392, 673], [1385, 809],
  [1121, 905], [1271, 899], [1340, 899], [1412, 875], [1410, 928], [1414, 900], [1287, 527], [1318, 495], [1340, 490],
  [1372, 480], [1380, 488], [1318, 525], [1340, 520], [1360, 525], [1380, 520], [1395, 535], [1417, 517], [1417, 533],
  [1365, 545], [1380, 550], [1345, 545], [1417, 555], [1417, 566], [1417, 577], [1417, 588], [1417, 598], [1400, 605],
  [1417, 610], [1417, 634], [1417, 645], [1417, 655], [1360, 590], [1365, 650], [1385, 655], [1400, 560], [1325, 540],
  [1345, 505], [1320, 585], [1400, 520], [1410, 640], [1400, 590], [1355, 500], [1370, 510], [1385, 530], [1372, 535], [1390, 548],
  [1350, 530], [1405, 575], [1405, 590], [1330, 510], [1408, 600],
];

const figText = { fontFamily: '"Liberation Sans", Arial, sans-serif' };

function ForcePlot() {
  return (
    <svg viewBox="0 0 900 475" className="ml-[92px] block w-[900px] max-w-full" style={figText} fontSize="17" role="img" aria-label="Force against fascicle velocity">
      <g stroke="#000" strokeWidth="2.500" fill="none">
        <path d="M79 30h21v387M79 393h618M697 5v412M89 99h11M89 173h11M89 246h11M89 319h11" />
        <path d="M250 393v16M400 393v16M549 393v16" strokeWidth="2" />
        <path d={smooth(eq10.map(scaleA))} strokeWidth="3" />
        <path d={smooth(eq11.map(scaleA))} strokeDasharray="4 4" />
        <path d="M752 150h49" strokeWidth="3" />
        <path d="M752 209h49" strokeDasharray="5 4" />
      </g>
      <Crosses points={forceSamples} scale={scaleA} width={3} />
      <text x="73" y="37" textAnchor="end">1.0</text>
      <text x="73" y="399" textAnchor="end">0.0</text>
      <text x="119" y="54" fontSize="21">A</text>
      <text x="77" y="440">–4.0</text>
      <text x="698" y="440" textAnchor="middle">0.0</text>
      <text x="397" y="460" fontSize="18" textAnchor="middle" stroke="#000" strokeWidth=".3">Fascicle Velocity (L<tspan fontSize="13" dy="4">0</tspan><tspan dy="-4">/s)</tspan></text>
      <text transform="translate(42 151) rotate(-90)" textAnchor="middle" stroke="#000" strokeWidth=".3">Force (F<tspan fontSize="13" dy="4">0</tspan><tspan dy="-4">)</tspan></text>
      <text x="817" y="151" stroke="#000" strokeWidth=".4">eq. (10)</text>
      <text x="817" y="210" stroke="#000" strokeWidth=".4">eq. (11)</text>
    </svg>
  );
}

function ResidualPlot({ letter, points, axis, yLabel }) {
  return (
    <svg viewBox="0 0 550 372" className="block w-[550px] min-w-0" style={figText} fontSize="17" role="img" aria-label={"Fitting errors, panel " + letter}>
      <g stroke="#000" strokeWidth="2.200" fill="none">
        <path d="M90 16h22v308M89 160h435M89 300h435M523 16v308" />
        <path d="M99 64h13M99 110h13M99 207h13M99 254h13M214 300v16M316 300v16M420 300v16" />
      </g>
      <Crosses points={points} scale={scaleBC(axis)} />
      <text x="82" y="21" textAnchor="end">0.15</text>
      <text x="82" y="165" textAnchor="end">0.00</text>
      <text x="77" y="306" textAnchor="end">–0.15</text>
      <text x="126" y="31" fontSize="20">{letter}</text>
      <text x="84" y="345">–4.0</text>
      <text x="515" y="345">0.0</text>
      <text x="321" y="365" fontSize="18" textAnchor="middle" stroke="#000" strokeWidth=".3">Fascicle Velocity (L<tspan fontSize="13" dy="4">0</tspan><tspan dy="-4">/s)</tspan></text>
      {yLabel && (
        <text transform="translate(26 145) rotate(-90)" textAnchor="middle" stroke="#000" strokeWidth=".3">Force (F<tspan fontSize="13" dy="4">0</tspan><tspan dy="-4">)</tspan></text>
      )}
    </svg>
  );
}

/* ---------- document viewer ---------- */

const docButton = "flex h-[34px] w-[34px] items-center justify-center rounded bg-[#4a4846] text-[#f2f2f2]";

function DocHeader() {
  return (
    <header className="grid h-[47px] shrink-0 grid-cols-[1fr_auto_1fr] items-center border-b border-[#1d1c1c] bg-[#323030] pr-[3px] pl-1.5 text-white">
      <div className="flex items-center">
        <button aria-label="Side pane" className="flex h-[34px] w-9 items-center justify-center rounded border border-black bg-[#1f1e1e]">
          <svg viewBox="0 0 14 12" width="14" height="12" aria-hidden="true">
            <path d="M0 0h14v12H0z" fill="#fff" />
            <path d="M2 2h3v8H2z" fill="#777" />
            <path d="M6 2h6v8H6z" fill="#1f1e1e" />
          </svg>
        </button>
        <div className="ml-1.5 flex h-[33px] w-[98px] overflow-hidden rounded bg-white">
          <input id="page" defaultValue="8" className="w-10 border-r border-black pr-2 text-right text-black outline-none" />
          <label htmlFor="page" className="flex flex-1 items-center bg-[#fafafa] pl-2.5 text-[#959595]">of 13</label>
        </div>
        <button aria-label="Annotate" className={docButton + " ml-2"}>
          <Icon><path d="m1 15 1.500-5L10 1.500l3 2L5.500 12z" fill="currentColor" stroke="none" /><path d="M12 9h3M10 11.500h5M8 14h7" strokeWidth="1.300" /></Icon>
        </button>
      </div>
      <div className="text-center">
        <h1 className="leading-[18px] font-bold">Mechanics of feline soleus: II design and validation of a mathematical model</h1>
        <p className="text-xs leading-[14px] text-[#949392]">BrownScottLoeb1996_MechanicsFelineSoleusIIDesignValidationMathematicalModel.pdf</p>
      </div>
      <div className="flex items-center justify-end">
        <div className="relative flex h-[33px] w-[88px] items-center">
          <select aria-label="Zoom" defaultValue="85%" className="h-full w-full appearance-none rounded bg-white pl-[29px] text-black outline-none">
            <option>85%</option>
            <option>100%</option>
          </select>
          <Caret className="pointer-events-none absolute right-[11px] text-[#666]" />
        </div>
        <button aria-label="Find" className={docButton + " ml-2"}><SearchIcon /></button>
        <button aria-label="Menu" className={docButton + " ml-2"}><MenuIcon /></button>
        <div className="ml-2.5 flex">
          <button aria-label="Minimise" className="flex size-10 items-center justify-center"><Icon><path d="M4 10.500h8" strokeWidth="1.300" /></Icon></button>
          <button aria-label="Restore" className="flex size-10 items-center justify-center"><Icon><path d="M4.500 6.500h5v6h-5z" strokeWidth="1.300" /><path d="M6.500 4.500h5.500v6" opacity=".6" /></Icon></button>
          <button aria-label="Close" className="flex size-10 items-center justify-center">
            <span className="flex size-5 items-center justify-center rounded-full bg-[#e95420]"><Icon size={14}><path d="m4 4 8 8M12 4l-8 8" strokeWidth="1.400" /></Icon></span>
          </button>
        </div>
      </div>
    </header>
  );
}

function DocPage() {
  return (
    <article className="min-w-0 flex-1 overflow-hidden border-x border-[#cfcfcf] bg-white pr-[108px] pl-[106px] font-['Liberation_Serif',serif] text-black shadow-[0_0_4px_rgba(0,0,0,0.2)]">
      <div className="-mt-1.5 flex justify-between text-2xl leading-6">
        <span>228</span>
        <span>BROWN, SCOTT and LOEB</span>
      </div>
      <div className="mt-[25px]"><ForcePlot /></div>
      <div className="mt-[27px] flex gap-[17px]">
        <ResidualPlot letter="B" points={residualsB} axis={366} yLabel />
        <ResidualPlot letter="C" points={residualsC} axis={333} />
      </div>
      <p className="mt-[19px] text-justify text-[23px] leading-[25px]">
        <b>Fig. 8.</b> FV shortening data, fits and errors. (A) SOL12 data and equations 10 and 11 fit. (B, C) fitting errors (all three cats pooled together) from equations 10 and 11 respectively.
      </p>
    </article>
  );
}

function DocWindow() {
  return (
    <section className="flex aspect-video w-4/7 flex-col overflow-hidden">
      <DocHeader />
      <div className="flex min-h-0 flex-1">
        <Thumbnails />
        <main className="flex min-w-0 flex-1 overflow-hidden border-b border-[#d5d5d5] bg-[#f6f6f6] pr-[213px] pl-[228px]">
          <DocPage />
        </main>
        <div className="flex w-[13px] shrink-0 justify-center border-l border-[#cbcbcb] bg-[#d8d8d8] pt-[563px]">
          <i className="h-10 w-1.5 rounded-full bg-[#9b9b9b]" />
        </div>
      </div>
    </section>
  );
}

export default function App() {
  return (
    <div className="flex items-start bg-black font-['Noto_Sans',sans-serif] text-sm">
      <section className="flex aspect-video w-3/7 flex-col overflow-hidden">
        <TopBar />
        <div className="flex min-h-0 flex-1">
          <Dock />
          <FilesWindow />
        </div>
      </section>
      <DocWindow />
    </div>
  );
}
